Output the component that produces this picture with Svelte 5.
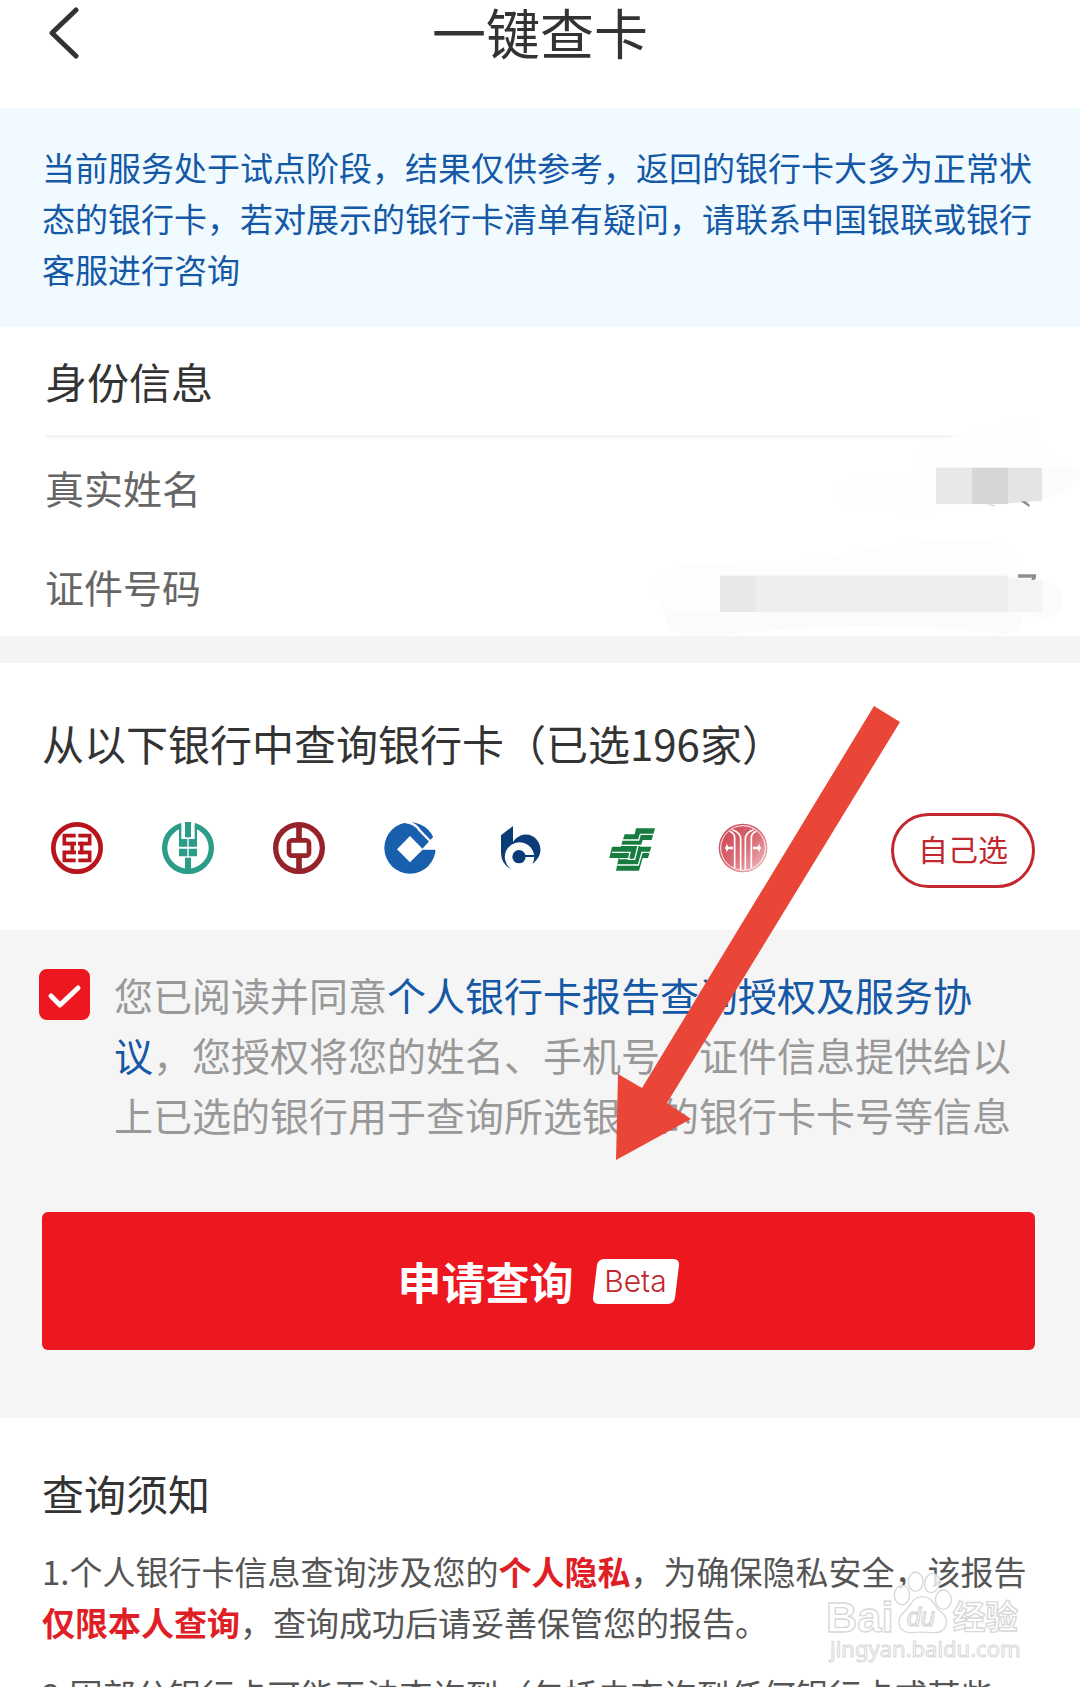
<script>
  let agreed = true
  let selectedCount = 196

  const fields = [
    { id: 'name', label: '真实姓名' },
    { id: 'number', label: '证件号码' }
  ]
</script>

<div class="page">
  <header class="header">
    <button class="back" aria-label="返回">
      <svg viewBox="0 0 32 52" width="32" height="52">
        <path d="M28 3 L4 26 L28 49" fill="none" stroke="#333" stroke-width="5" stroke-linecap="round" stroke-linejoin="round" />
      </svg>
    </button>
    <h1>一键查卡</h1>
  </header>

  <p class="tip">当前服务处于试点阶段，结果仅供参考，返回的银行卡大多为正常状态的银行卡，若对展示的银行卡清单有疑问，请联系中国银联或银行客服进行咨询</p>

  <section class="identity">
    <h2>身份信息</h2>
    <dl>
      {#each fields as field (field.id)}
        <div class="row">
          <dt>{field.label}</dt>
          <dd></dd>
        </div>
      {/each}
    </dl>
    <!-- masked values -->
    <svg class="mask" viewBox="0 0 1320 690" width="440" height="230" aria-hidden="true">
      <path d="M825 140 Q830 75 950 46 Q1100 0 1170 5 Q1200 10 1195 60 Q1205 110 1260 118 L1320 150 V180 Q1300 220 1206 240 L840 282 Q800 275 640 276 Q580 260 590 200 Q620 160 825 155 Z" fill="#fefefe" />
      <path d="M1206 141 H1315 Q1330 200 1206 240 Z" fill="#fcfcfc" />
      <path d="M45 490 Q50 430 200 432 Q420 418 560 418 Q680 370 940 357 Q1120 350 1133 410 Q1130 440 1104 466 L240 575 H80 Q40 540 45 490 Z" fill="#fdfdfd" />
      <path d="M75 575 H1148 Q1145 645 1085 642 Q720 600 400 632 Q220 650 130 648 Q75 630 75 575 Z" fill="#fbfbfb" />
      <path d="M1104 468 Q1270 470 1270 545 Q1265 610 1150 585 L1104 575 Z" fill="#fbfbfb" />
      <rect x="888" y="143" width="108" height="109" fill="#e8e8e8" />
      <rect x="996" y="143" width="108" height="109" fill="#d6d6d6" />
      <path d="M1104 143 H1206 V242 L1104 250 Z" fill="#e4e4e4" />
      <path d="M1142 244 L1157 244 L1170 255 L1167 261 Z" fill="#8f8f8f" />
      <path d="M1042 253 Q1056 262 1070 255 Z" fill="#d0d0d0" />
      <rect x="240" y="467" width="108" height="109" fill="#e8e8e8" />
      <rect x="348" y="467" width="540" height="109" fill="#eee" />
      <rect x="888" y="467" width="216" height="109" fill="#ededed" />
      <path d="M1104 475 L1206 482 V576 H1104 Z" fill="#f3f3f3" />
      <path d="M1134 463 H1188 V474 L1184 480 H1174 L1176 473 H1134 Z" fill="#8f8f8f" />
    </svg>
  </section>

  <section class="banks">
    <h2>从以下银行中查询银行卡（已选{selectedCount}家）</h2>
    <div class="bank-row">
      <ul>
        <li>
          <svg viewBox="-78 -78 156 156" role="img" aria-label="工商银行">
            <circle r="71" fill="none" stroke="#b8141c" stroke-width="14" />
            <g fill="none" stroke="#b8141c" stroke-width="11">
              <path d="M-4 -37 H-38 V-13 H-14 V13 H-38 V37 H-4" />
              <path d="M4 -37 H38 V-13 H14 V13 H38 V37 H4" />
              <path d="M-19 -13 H-3 M-19 13 H-3 M19 -13 H3 M19 13 H3" />
            </g>
          </svg>
        </li>
        <li>
          <svg viewBox="-78 -78 156 156" role="img" aria-label="农业银行">
            <circle r="70" fill="none" stroke="#2a9c88" stroke-width="16" />
            <path d="M-20 -80 H20 V-26 H-20 Z" fill="#fff" />
            <g fill="#2a9c88">
              <path d="M-9 -78 H9 V-32 H-9 Z" />
              <path d="M-27 -64 H-20 V-26 H-27 Z M20 -64 H27 V-26 H20 Z" />
              <path d="M-27 -27 H-2 V-4 H-27 Z M2 -27 H27 V-4 H2 Z" />
              <path d="M-27 2 H-2 V25 H-27 Z M2 2 H27 V25 H2 Z" />
              <path d="M-9 29 H9 V76 H-9 Z" />
            </g>
          </svg>
        </li>
        <li>
          <svg viewBox="-78 -78 156 156" role="img" aria-label="中国银行">
            <g fill="none" stroke="#96222a">
              <circle r="70" stroke-width="16" />
              <rect x="-30" y="-23" width="60" height="46" rx="9" stroke-width="14" />
              <path d="M0 -70 V-24 M0 24 V70" stroke-width="17" />
            </g>
          </svg>
        </li>
        <li>
          <svg viewBox="-78 -78 156 156" role="img" aria-label="建设银行">
            <circle r="77" fill="#1860ae" />
            <path d="M0 -36 L39 4 L0 43 L-39 4 Z" fill="#fff" />
            <path d="M36 4 L58 -21 L76 -40 L90 -40 V5 H36 Z" fill="#fff" />
            <path d="M-14 -78 Q14 -76 28 -54 L60 -21" fill="none" stroke="#fff" stroke-width="7" />
          </svg>
        </li>
        <li>
          <svg viewBox="-78 -78 156 156" role="img" aria-label="交通银行">
            <g fill="#0a3c78">
              <path d="M-60 -38 L-24 -66 V-18 C-6 -46 30 -48 48 -24 C66 0 60 28 34 48 A44 44 0 1 0 -28 64 Q-60 48 -60 14 Z" />
              <circle cx="-6" cy="26" r="20" />
              <path d="M-6 21 H40 V27 H-6 Z" />
            </g>
          </svg>
        </li>
        <li>
          <svg viewBox="-78 -78 156 156" role="img" aria-label="邮储银行">
            <path d="M12 -59 H69 L59 -24 H32 L27 -8 L24 -4 H58 L48 30 H32 L21 68 H-48 L-40 30 H-68 L-60 -4 H-34 L-22 -41 H8 Z" fill="#177d3e" />
            <g fill="none" stroke="#fff" stroke-width="4">
              <path d="M64 -41 H25 L20 -24 H-28" />
              <path d="M28 -8 H-36" />
              <path d="M-60 13 H-6 L-10 32 H-38" />
              <path d="M18 -6 L8 34 H-12" />
              <path d="M56 13 H30 L19 51 H-44" />
            </g>
          </svg>
        </li>
        <li>
          <svg viewBox="-78 -78 156 156" role="img" aria-label="中信银行">
            <defs>
              <linearGradient id="citic" x1="0" y1="0" x2="1" y2="1">
                <stop offset="0" stop-color="#c93c4a" />
                <stop offset="0.55" stop-color="#db6f79" />
                <stop offset="1" stop-color="#f3ccd0" />
              </linearGradient>
            </defs>
            <circle r="73" fill="url(#citic)" />
            <g fill="none" stroke="#fff" stroke-width="5">
              <circle r="67" stroke-width="3" />
              <path d="M-25 60 V-30 Q-25 -44 -40 -50 M-7 66 V-28 Q-7 -46 -32 -55 M7 66 V-28 Q7 -46 32 -55 M25 60 V-30 Q25 -44 40 -50" />
            </g>
            <path d="M-50 -14 L-44 -4 H-30 V4 H-44 L-50 14 Q-48 4 -56 0 Q-48 -4 -50 -14 Z M50 -14 L44 -4 H30 V4 H44 L50 14 Q48 4 56 0 Q48 -4 50 -14 Z" fill="#fff" />
          </svg>
        </li>
      </ul>
      <button class="choose">自己选</button>
    </div>
  </section>

  <section class="apply">
    <div class="consent">
      <span class="check">
        <input id="agree" type="checkbox" bind:checked={agreed} />
        {#if agreed}
          <svg viewBox="0 0 51 51" aria-hidden="true">
            <path d="M12 27 L21 36 L39 19" fill="none" stroke="#fff" stroke-width="5" stroke-linecap="round" stroke-linejoin="round" />
          </svg>
        {/if}
      </span>
      <label for="agree">您已阅读并同意<a href="#agreement">个人银行卡报告查询授权及服务协议</a>，您授权将您的姓名、手机号、证件信息提供给以上已选的银行用于查询所选银行的银行卡卡号等信息</label>
    </div>
    <button class="submit">申请查询<span class="beta">Beta</span></button>
  </section>

  <section class="notes">
    <h2>查询须知</h2>
    <p>1.个人银行卡信息查询涉及您的<strong>个人隐私</strong>，为确保隐私安全，该报告<strong>仅限本人查询</strong>，查询成功后请妥善保管您的报告。</p>
    <p>2.因部分银行卡可能无法查询到（包括未查询到任何银行卡或某些</p>

    <svg class="watermark" viewBox="0 0 900 441" width="300" height="147">
      <g fill="#fff" fill-opacity="0.8" stroke="#d8d8d8" stroke-width="4">
        <ellipse cx="366" cy="165" rx="23" ry="29" />
        <ellipse cx="407" cy="125" rx="22" ry="29" />
        <ellipse cx="456" cy="129" rx="22" ry="29" transform="rotate(12 456 129)" />
        <ellipse cx="490" cy="179" rx="24" ry="29" />
        <path d="M428 170 C462 170 460 203 484 216 C512 240 500 279 462 278 C440 278 418 274 396 278 C354 280 346 240 372 216 C394 200 394 170 428 170 Z" />
        <text x="138" y="275" class="latin" font-size="130">Bai</text>
        <text x="518" y="266" class="cjk" font-size="98">经验</text>
        <text x="150" y="352" class="url" font-size="66" stroke-width="3">jingyan.baidu.com</text>
        <text x="380" y="257" class="du" font-size="76">du</text>
      </g>
    </svg>
  </section>

  <svg class="arrow" viewBox="0 0 284 454" width="284" height="454" aria-hidden="true">
    <path d="M258 0 L284 16 L51 397 L75 413 L0 454 L2 368 L26 382 Z" fill="#ea4637" />
  </svg>
</div>

<style>
:global(body) {
  background: #fff;
}

.page {
  position: relative;
  overflow: hidden;
  color: #333;
  font-family: "Noto Sans CJK SC", "Noto Sans", sans-serif;
}

h1, h2, p, ul, dl, dd {
  margin: 0;
  padding: 0;
}

h1, h2 {
  font-weight: 400;
}

h2 {
  font-size: 42px;
  line-height: 60px;
}

button {
  font-family: inherit;
  cursor: pointer;
}

.header {
  display: grid;
  grid-template-columns: 80px 1fr 80px;
  padding-bottom: 44px;
}

.header h1 {
  font-size: 54px;
  line-height: 64px;
  text-align: center;
}

.back {
  display: flex;
  align-items: center;
  justify-content: flex-end;
  padding: 2px 0 0;
  border: 0;
  background: none;
}

.tip {
  padding: 34px 42px 32px;
  background: #f0faff;
  color: #1458a6;
  font-size: 33px;
  line-height: 51px;
}

.identity {
  position: relative;
  padding: 0 45px;
}

.identity h2 {
  padding: 24px 0;
  border-bottom: 3px solid #f4f4f4;
}

.row {
  display: flex;
  justify-content: space-between;
  color: #666;
  font-size: 39px;
  line-height: 99px;
}

.mask {
  position: absolute;
  right: 0;
  bottom: -14px;
}

.banks {
  padding: 50px 45px 42px 42px;
  border-top: 27px solid #f4f4f4;
}

.bank-row {
  display: flex;
  justify-content: space-between;
  margin-top: 40px;
}

.bank-row ul {
  display: flex;
  gap: 59px;
  padding: 9px 0 0 9px;
  list-style: none;
}

.bank-row li svg {
  display: block;
  width: 52px;
  height: 52px;
}

.choose {
  width: 144px;
  height: 75px;
  padding: 0 0 6px;
  border: 3px solid #c1272d;
  border-radius: 38px;
  background: #fff;
  color: #c1272d;
  font-size: 30px;
}

.apply {
  padding: 34px 45px 68px 42px;
  background: #f5f5f5;
}

.consent {
  display: flex;
  gap: 24px;
  margin-left: -3px;
}

.check {
  position: relative;
  flex: none;
  width: 51px;
  height: 51px;
  margin-top: 5px;
}

.check input {
  display: block;
  width: 100%;
  height: 100%;
  margin: 0;
  border: 2px solid #ccc;
  border-radius: 8px;
  background: #fff;
  appearance: none;
}

.check input:checked {
  border-color: #ed1720;
  background: #ed1720;
}

.check svg {
  position: absolute;
  inset: 0;
  pointer-events: none;
}

.consent label {
  color: #999;
  font-size: 39px;
  line-height: 60px;
}

.consent a {
  color: #1458a6;
  text-decoration: none;
}

.submit {
  display: flex;
  align-items: center;
  justify-content: center;
  gap: 18px;
  width: 100%;
  height: 138px;
  margin-top: 68px;
  border: 0;
  border-radius: 6px;
  background: #ed1720;
  color: #fff;
  font-size: 44px;
  font-weight: 700;
}

.beta {
  position: relative;
  z-index: 0;
  width: 88px;
  color: #c1272d;
  font-family: Inter, sans-serif;
  font-size: 30px;
  font-weight: 300;
  line-height: 45px;
}

.beta::before {
  content: "";
  position: absolute;
  inset: 0 3px;
  z-index: -1;
  border-radius: 6px;
  background: #fff;
  transform: skewX(-7deg);
}

.notes {
  position: relative;
  padding: 45px 42px 0;
}

.notes p {
  margin-bottom: 21px;
  color: #555;
  font-size: 33px;
  line-height: 51px;
}

.notes h2 {
  margin-bottom: 23px;
}

.notes strong {
  color: #e01e26;
  font-weight: 700;
}

.watermark {
  position: absolute;
  top: 122px;
  right: 0;
}

.latin, .du {
  font-family: "Liberation Sans", sans-serif;
  font-weight: 700;
}

.du {
  font-style: italic;
  font-weight: 400;
}

.cjk {
  font-weight: 700;
}

.url {
  font-family: "Noto Sans", sans-serif;
}

/* hand-drawn pointer lying over the page */
.arrow {
  position: absolute;
  top: 706px;
  right: 180px;
  pointer-events: none;
}
</style>
